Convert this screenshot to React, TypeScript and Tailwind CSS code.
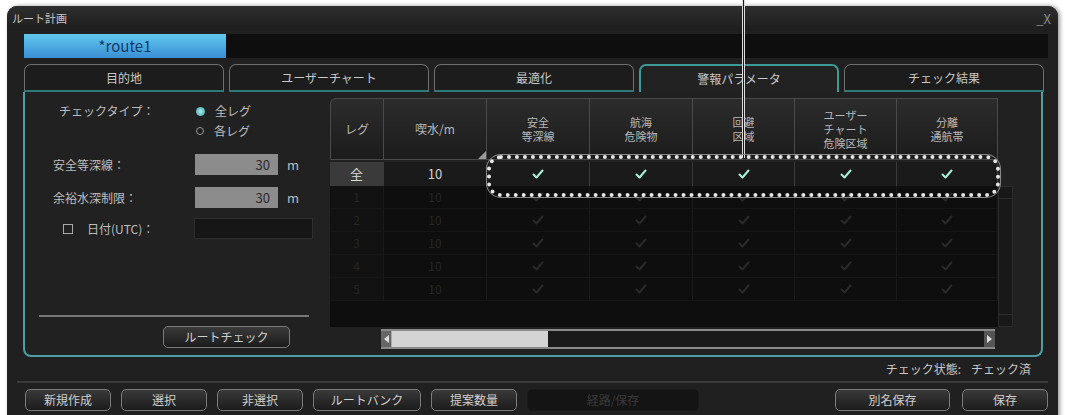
import React from "react";

const F = { fontFamily: '"Noto Sans CJK JP", "Noto Sans", sans-serif' };

function Check({ dim }: { dim?: boolean }) {
  return (
    <svg width="12" height="10" viewBox="0 0 12 10">
      <path
        d="M1.5 5.5 L4.5 8.5 L10.5 1.5"
        fill="none"
        stroke={dim ? "#2a2a2a" : "#a8f0dc"}
        strokeWidth="2"
        strokeLinecap="round"
        strokeLinejoin="round"
      />
    </svg>
  );
}

function Btn({ label, w, dim }: { label: string; w: string; dim?: boolean }) {
  return (
    <div
      className={`${w} h-[22px] flex items-center justify-center text-[12px] rounded-[5px] ${
        dim
          ? "bg-[#141414] text-[#3a3a3a] border border-[#1a1a1a]"
          : "border border-[#7a7a7a] bg-gradient-to-b from-[#3a3a3a] to-[#1c1c1c] text-[#cfcfcf]"
      }`}
    >
      {label}
    </div>
  );
}

const cols = ["w-[54px]", "w-[103px]", "w-[103px]", "w-[103px]", "w-[102px]", "w-[102px]", "w-[101px]"];

export default function App() {
  const tabs = ["目的地", "ユーザーチャート", "最適化", "警報パラメータ", "チェック結果"];
  const headers: React.ReactNode[] = [
    "レグ",
    "喫水/m",
    <>安全<br />等深線</>,
    <>航海<br />危険物</>,
    <>回避<br />区域</>,
    <>ユーザー<br />チャート<br />危険区域</>,
    <>分離<br />通航帯</>,
  ];
  return (
    <div className="w-[1065px] h-[415px] bg-white overflow-hidden relative" style={F}>
      <div className="absolute left-[7px] top-[6px] w-[1051px] h-[420px] rounded-t-[10px] bg-[#202020] shadow-[2px_0_4px_rgba(0,0,0,0.4)] flex flex-col">
        {/* title */}
        <div className="h-[25px] flex items-center justify-between px-[5px] bg-gradient-to-b from-[#2e2e2e] to-[#1e1e1e] rounded-t-[10px]">
          <span className="text-[11px] text-[#c8c8c8]">ルート計画</span>
          <span className="text-[13px] text-[#8a8a8a] leading-none pr-[2px]">_X</span>
        </div>
        {/* route bar */}
        <div className="ml-[17px] mr-[10px] mt-[3px] h-[24px] bg-[#0e0e0e] flex">
          <div className="w-[202px] h-full bg-gradient-to-b from-[#62c8ee] to-[#3a8ed4] flex items-center justify-center text-[15px] text-[#123a6a]">
            *route1
          </div>
        </div>
        {/* tabs */}
        <div className="ml-[17px] mt-[6px] flex gap-[5px] h-[28px]">
          {tabs.map((t, i) => (
            <div
              key={t}
              className={`w-[200px] h-full rounded-t-[7px] flex items-center justify-center text-[12px] text-[#c8c8c8] ${
                i === 3
                  ? "border-2 border-b-0 border-[#3f9a9a] bg-[#222]"
                  : "border border-[#6f6f6f] border-b-2 border-b-[#2f7a78] bg-[#1c1c1c]"
              }`}
            >
              {t}
            </div>
          ))}
        </div>
        {/* panel */}
        <div className="ml-[16px] w-[1020px] h-[265px] border-2 border-t-0 border-[#4f9ea4] rounded-b-[8px] bg-[#212121] flex">
          {/* left */}
          <div className="w-[305px] flex flex-col text-[12px] text-[#bdbdbd] pl-[14px] pt-[10px]">
            <div className="flex">
              <span className="ml-[20px] w-[137px]">チェックタイプ：</span>
              <div className="flex flex-col gap-[2px]">
                <div className="flex items-center gap-[10px]">
                  <span className="w-[9px] h-[9px] rounded-full bg-[radial-gradient(circle,#a8f0f0,#3a9aa0)]" />
                  <span>全レグ</span>
                </div>
                <div className="flex items-center gap-[10px]">
                  <span className="w-[8px] h-[8px] rounded-full border border-[#999]" />
                  <span>各レグ</span>
                </div>
              </div>
            </div>
            <div className="flex items-center mt-[14px] h-[21px]">
              <span className="ml-[14px] w-[142px]">安全等深線：</span>
              <div className="w-[83px] h-[21px] bg-[#8c8c8c] text-right pr-[8px] text-[13px] text-[#2a2a2a] leading-[21px]">30</div>
              <span className="ml-[9px] text-[13px]">m</span>
            </div>
            <div className="flex items-center mt-[12px] h-[21px]">
              <span className="ml-[14px] w-[142px]">余裕水深制限：</span>
              <div className="w-[83px] h-[21px] bg-[#8c8c8c] text-right pr-[8px] text-[13px] text-[#2a2a2a] leading-[21px]">30</div>
              <span className="ml-[9px] text-[13px]">m</span>
            </div>
            <div className="flex items-center mt-[10px] h-[21px]">
              <span className="ml-[24px] w-[10px] h-[10px] border border-[#aaa]" />
              <span className="ml-[14px] w-[107px]">日付(UTC)：</span>
              <div className="w-[119px] h-[21px] bg-[#161616] border border-[#2e2e2e]" />
            </div>
            <div className="flex-1" />
            <div className="w-[270px] h-[2px] bg-[#777]" />
            <div className="flex mt-[9px] mb-[7px] pl-[124px]">
              <Btn label="ルートチェック" w="w-[127px]" />
            </div>
          </div>
          {/* table */}
          <div className="w-[683px] pt-[6px] flex flex-col">
            <div className="flex h-[62px]">
              {headers.map((h, i) => (
                <div
                  key={i}
                  className={`${cols[i]} h-full relative border-r border-b border-[#4a4a4a] bg-gradient-to-b from-[#2c2c2c] to-[#1c1c1c] flex items-center justify-center text-center text-[11px] leading-[14px] text-[#b8b8b8] ${
                    i === 0 ? "rounded-tl-[6px] border-l border-t" : "border-t"
                  }`}
                >
                  <span className={i < 2 ? "text-[12px]" : ""}>{h}</span>
                  {i === 1 && (
                    <span className="absolute right-0 bottom-0 w-0 h-0 border-l-[8px] border-l-transparent border-b-[8px] border-b-[#9a9a9a]" />
                  )}
                </div>
              ))}
            </div>
            <div className="flex h-[24px] mt-[2px]">
              {cols.map((c, i) => (
                <div
                  key={i}
                  className={`${c} h-full border-r border-[#3a3a3a] flex items-center justify-center text-[13px] ${
                    i === 0 ? "bg-[#3a3a3a] text-[#d8d8d8] text-[12px]" : "bg-[#1a1a1a] text-[#d0d0d0]"
                  }`}
                >
                  {i === 0 ? "全" : i === 1 ? "10" : <Check />}
                </div>
              ))}
            </div>
            <div className="flex flex-1">
              <div className="flex-1 flex flex-col bg-[#0e0e0e]">
                {[1, 2, 3, 4, 5].map((n) => (
                  <div key={n} className="flex h-[23px] border-b border-[#161616]">
                    {cols.map((c, i) => (
                      <div
                        key={i}
                        className={`${c} h-full border-r border-[#1a1a1a] flex items-center justify-center text-[12px] text-[#262626] ${
                          i === 0 ? "bg-[#121212]" : ""
                        }`}
                      >
                        {i === 0 ? n : i === 1 ? "10" : <Check dim />}
                      </div>
                    ))}
                  </div>
                ))}
                <div className="flex-1" />
              </div>
              <div className="w-[15px] bg-[#181818] border border-[#2c2c2c] flex flex-col">
                <div className="h-[12px] border-b border-[#2c2c2c]" />
                <div className="flex-1" />
                <div className="h-[12px] border-t border-[#2c2c2c]" />
              </div>
            </div>
            <div className="flex h-[20px] mb-[6px] mt-[2px]">
              <div className="w-[51px]" />
              <div className="w-[614px] h-full border-y-2 border-[#8a8a8a] bg-[#1a1a1a] flex items-center">
                <div className="w-[11px] h-full bg-[#666] border-r border-[#aaa] flex items-center justify-center">
                  <span className="w-0 h-0 border-r-[5px] border-r-[#ddd] border-y-[4px] border-y-transparent" />
                </div>
                <div className="w-[156px] h-full bg-[#d4d4d4]" />
                <div className="flex-1" />
                <div className="w-[11px] h-full bg-[#555] flex items-center justify-center">
                  <span className="w-0 h-0 border-l-[5px] border-l-[#ddd] border-y-[4px] border-y-transparent" />
                </div>
              </div>
            </div>
          </div>
        </div>
        {/* status */}
        <div className="h-[24px] flex items-center justify-end pr-[27px] text-[12px] text-[#c8c8c8] gap-[10px]">
          <span>チェック状態:</span>
          <span>チェック済</span>
        </div>
        <div className="mx-[10px] h-[2px] bg-[#3a3a3a]" />
        {/* buttons */}
        <div className="flex items-center h-[26px] mt-[4px] pl-[18px] pr-[10px]">
          <div className="flex gap-[10px]">
            <Btn label="新規作成" w="w-[86px]" />
            <Btn label="選択" w="w-[86px]" />
            <Btn label="非選択" w="w-[86px]" />
            <Btn label="ルートバンク" w="w-[108px]" />
            <Btn label="提案数量" w="w-[86px]" />
            <Btn label="経路/保存" w="w-[172px]" dim />
          </div>
          <div className="flex-1" />
          <div className="flex gap-[12px]">
            <Btn label="別名保存" w="w-[115px]" />
            <Btn label="保存" w="w-[86px]" />
          </div>
        </div>
      </div>
      {/* annotation */}
      <div className="absolute left-[742px] top-0 w-[3px] h-[158px] bg-[#1a1a1a] border-x border-[#ddd]" />
      <div className="absolute left-[487px] top-[155px] w-[513px] h-[42px] rounded-[14px] border-[4px] border-dotted border-[#e6e6e6] shadow-[0_0_0_1px_#888]" />
    </div>
  );
}
